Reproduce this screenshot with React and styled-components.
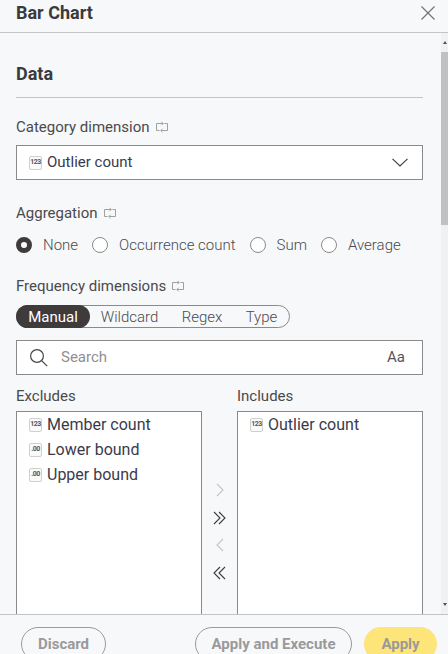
import React from "react";
import styled, { createGlobalStyle } from "styled-components";

const GlobalStyle = createGlobalStyle`
  html, body {
    margin: 0;
    padding: 0;
    height: 100%;
    overflow: hidden;
    background: #f7f8fa;
    font-family: Roboto, "Liberation Sans", sans-serif;
    color: #3a3a3c;
  }
  * { box-sizing: border-box; }
`;

const Panel = styled.div`
  width: 448px;
  height: 654px;
  display: flex;
  flex-direction: column;
  background: #f7f8fa;
`;

const Header = styled.header`
  height: 33px;
  flex: none;
  display: flex;
  align-items: center;
  justify-content: space-between;
  padding: 0 13px 6px 16px;
  border-bottom: 1px solid #c4c4c4;
`;

const Title = styled.h1`
  margin: 0;
  font-size: 18px;
  font-weight: 700;
  line-height: 24px;
  color: #3a3a3c;
`;

const Middle = styled.div`
  flex: 1;
  min-height: 0;
  display: flex;
`;

const Content = styled.main`
  flex: 1;
  min-width: 0;
  overflow: hidden;
  padding: 29px 18px 0 16px;
`;

const ScrollTrack = styled.div`
  width: 7px;
  flex: none;
  display: flex;
  flex-direction: column;
  align-items: center;
  background: #f1f1f1;
`;

const ScrollArrow = styled.div`
  height: 19px;
  width: 100%;
  display: flex;
  align-items: center;
  justify-content: center;
  flex: none;
  margin-top: ${(p) => (p.$down ? "auto" : "0")};
  &::before {
    content: "";
    border-left: 2.5px solid transparent;
    border-right: 2.5px solid transparent;
    ${(p) => (p.$down ? "border-top" : "border-bottom")}: 3px solid #505050;
  }
`;

const ScrollThumb = styled.div`
  width: 100%;
  height: 173px;
  flex: none;
  background: #c1c1c1;
`;

const SectionTitle = styled.h2`
  margin: 0;
  font-size: 18px;
  font-weight: 700;
  line-height: 24px;
  padding-bottom: 11px;
  border-bottom: 1px solid #c4c4c4;
  color: #3a3a3c;
`;

const FieldLabel = styled.div`
  display: flex;
  align-items: center;
  gap: 6px;
  margin-top: ${(p) => p.$top}px;
  font-size: 15px;
  line-height: 20px;
  color: #4a4a4c;
`;

const SelectBox = styled.div`
  margin-top: 8px;
  height: 35px;
  display: flex;
  align-items: center;
  gap: 5px;
  padding: 0 14px 0 12px;
  background: #fff;
  border: 1px solid #8a8a8a;
  font-size: 15px;
  color: #3a3a4c;
`;

const SelectText = styled.span`
  flex: 1;
  margin-bottom: 2px;
`;

const TypeBadge = styled.span`
  width: 13px;
  height: 14px;
  flex: none;
  display: inline-flex;
  align-items: center;
  justify-content: center;
  background: #fafafa;
  border: 1px solid #cfcfcf;
  border-radius: 2px;
  font-size: 7px;
  line-height: 1;
  font-weight: 700;
  letter-spacing: -0.5px;
  color: #555;
`;

const RadioRow = styled.div`
  margin-top: 12px;
  height: 20px;
  display: flex;
  align-items: center;
  font-size: 15px;
  font-weight: 300;
  color: #4a4a4e;
`;

const RadioOption = styled.label`
  display: flex;
  align-items: center;
  gap: 11px;
  margin-right: 14px;
`;

const RadioDot = styled.span`
  width: 16px;
  height: 16px;
  flex: none;
  border-radius: 50%;
  border: ${(p) => (p.$checked ? "5.5px solid #3f3b3b" : "1px solid #8a8a8a")};
  background: #fff;
`;

const Pills = styled.div`
  margin-top: 9px;
  width: 274px;
  height: 23px;
  display: flex;
  align-items: center;
  border: 1px solid #8a8a8a;
  border-radius: 12px;
  font-size: 15px;
  font-weight: 300;
`;

const Pill = styled.span`
  height: 23px;
  display: flex;
  align-items: center;
  justify-content: center;
  width: ${(p) => p.$width}px;
  border-radius: 12px;
  background: ${(p) => (p.$active ? "#3f3b3b" : "transparent")};
  color: ${(p) => (p.$active ? "#fff" : "#4a4a4e")};
  font-weight: ${(p) => (p.$active ? 400 : 300)};
  &:first-child {
    margin-left: -1px;
  }
`;

const SearchBox = styled.div`
  margin-top: 12px;
  height: 35px;
  display: flex;
  align-items: center;
  gap: 13px;
  padding: 0 17px 0 12px;
  background: #fff;
  border: 1px solid #8a8a8a;
  font-size: 15px;
`;

const SearchHint = styled.span`
  flex: 1;
  margin-bottom: 2px;
  color: #8f8f93;
`;

const CaseToggle = styled.span`
  margin-bottom: 2px;
  color: #55555a;
`;

const Lists = styled.div`
  margin-top: 11px;
  display: grid;
  grid-template-columns: 186px 35px 186px;
`;

const ListColumn = styled.div`
  display: flex;
  flex-direction: column;
  min-width: 0;
`;

const ListLabel = styled.div`
  font-size: 15px;
  line-height: 20px;
  color: #4a4a4c;
  margin-bottom: 5px;
`;

const ListBox = styled.div`
  height: 260px;
  padding: 0 12px;
  background: #fff;
  border: 1px solid #8a8a8a;
`;

const ListItem = styled.div`
  height: 25px;
  display: flex;
  align-items: center;
  gap: 5px;
  font-size: 16px;
  color: #3a3a4c;
`;

const Movers = styled.div`
  padding-top: 95px;
  display: flex;
  flex-direction: column;
  align-items: center;
`;

const MoverIcon = styled.svg`
  width: 18px;
  height: 18px;
  display: block;
  margin-bottom: 9.5px;
  fill: none;
  stroke: ${(p) => (p.$muted ? "#c4c4c4" : "#3c3c3c")};
  stroke-width: 1.1;
`;

const Footer = styled.footer`
  height: 40px;
  flex: none;
  display: flex;
  align-items: flex-start;
  padding: 12px 11px 0 21px;
  border-top: 1px solid #c4c4c4;
`;

const FooterButton = styled.button`
  height: 34px;
  padding: 0;
  width: ${(p) => p.$width}px;
  margin-left: ${(p) => p.$left || 0}px;
  flex: none;
  border-radius: 17px;
  border: ${(p) => (p.$primary ? "none" : "1px solid #9a9a9a")};
  background: ${(p) => (p.$primary ? "#fde57a" : "transparent")};
  color: #9a9a9a;
  font-family: inherit;
  font-size: 15px;
  font-weight: 700;
`;

const SyncIcon = () => (
  <svg width="12" height="12" viewBox="0 0 12 12" fill="none" stroke="#a0a0a0" strokeWidth="1">
    <path d="M7 2.5H.5v7h3M5 9.5h6.5v-7h-3" />
    <path d="M5.5.8l1.700 1.700-1.700 1.700M6.500 7.800L4.800 9.500l1.700 1.700" />
  </svg>
);

const CloseIcon = () => (
  <svg width="14" height="14" viewBox="0 0 14 14" fill="none" stroke="#707070" strokeWidth="1.1">
    <path d="M.5.5l13 13M13.500.5l-13 13" />
  </svg>
);

const ChevronDown = () => (
  <svg width="16" height="9" viewBox="0 0 16 9" fill="none" stroke="#3c3c3c" strokeWidth="1.1">
    <path d="M.5.8L8 8l7.500-7.200" />
  </svg>
);

const SearchIcon = () => (
  <svg width="19" height="19" viewBox="0 0 19 19" fill="none" stroke="#444" strokeWidth="1.2">
    <circle cx="8" cy="8" r="6.400" />
    <path d="M12.600 12.600l5.600 5.600" />
  </svg>
);

const aggregations = ["None", "Occurrence count", "Sum", "Average"];
const modes = [
  ["Manual", 74],
  ["Wildcard", 79],
  ["Regex", 66],
  ["Type", 53],
];
const excludes = [
  ["123", "Member count"],
  [".00", "Lower bound"],
  [".00", "Upper bound"],
];

const App = () => (
  <Panel>
    <GlobalStyle />
    <Header>
      <Title>Bar Chart</Title>
      <CloseIcon />
    </Header>
    <Middle>
      <Content>
        <SectionTitle>Data</SectionTitle>
        <FieldLabel $top={19}>
          Category dimension <SyncIcon />
        </FieldLabel>
        <SelectBox>
          <TypeBadge>123</TypeBadge>
          <SelectText>Outlier count</SelectText>
          <ChevronDown />
        </SelectBox>
        <FieldLabel $top={23}>
          Aggregation <SyncIcon />
        </FieldLabel>
        <RadioRow>
          {aggregations.map((name, i) => (
            <RadioOption key={name}>
              <RadioDot $checked={i === 0} />
              {name}
            </RadioOption>
          ))}
        </RadioRow>
        <FieldLabel $top={21}>
          Frequency dimensions <SyncIcon />
        </FieldLabel>
        <Pills>
          {modes.map(([name, width], i) => (
            <Pill key={name} $width={width} $active={i === 0}>
              {name}
            </Pill>
          ))}
        </Pills>
        <SearchBox>
          <SearchIcon />
          <SearchHint>Search</SearchHint>
          <CaseToggle>Aa</CaseToggle>
        </SearchBox>
        <Lists>
          <ListColumn>
            <ListLabel>Excludes</ListLabel>
            <ListBox>
              {excludes.map(([type, name]) => (
                <ListItem key={name}>
                  <TypeBadge>{type}</TypeBadge>
                  {name}
                </ListItem>
              ))}
            </ListBox>
          </ListColumn>
          <Movers>
            <MoverIcon $muted viewBox="0 0 18 18">
              <path d="M6 3l6 6-6 6" />
            </MoverIcon>
            <MoverIcon viewBox="0 0 18 18">
              <path d="M3 3l6 6-6 6M8 3l6 6-6 6" />
            </MoverIcon>
            <MoverIcon $muted viewBox="0 0 18 18">
              <path d="M12 3L6 9l6 6" />
            </MoverIcon>
            <MoverIcon viewBox="0 0 18 18">
              <path d="M9 3L3 9l6 6M14 3L8 9l6 6" />
            </MoverIcon>
          </Movers>
          <ListColumn>
            <ListLabel>Includes</ListLabel>
            <ListBox>
              <ListItem>
                <TypeBadge>123</TypeBadge>
                Outlier count
              </ListItem>
            </ListBox>
          </ListColumn>
        </Lists>
      </Content>
      <ScrollTrack>
        <ScrollArrow />
        <ScrollThumb />
        <ScrollArrow $down />
      </ScrollTrack>
    </Middle>
    <Footer>
      <FooterButton $width={85}>Discard</FooterButton>
      <FooterButton $width={157} $left={89}>Apply and Execute</FooterButton>
      <FooterButton $primary $width={73} $left={12}>Apply</FooterButton>
    </Footer>
  </Panel>
);

export default App;
